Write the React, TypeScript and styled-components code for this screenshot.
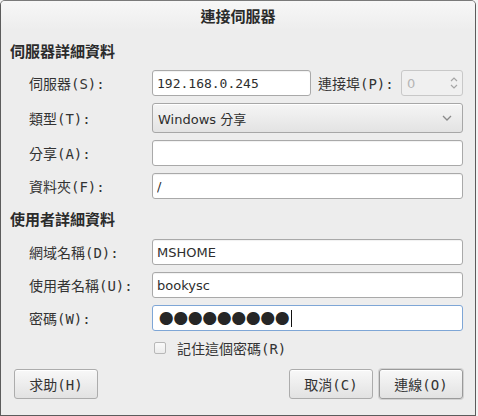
import React from "react";
import styled, { createGlobalStyle } from "styled-components";

const Global = createGlobalStyle`
  html, body { margin: 0; padding: 0; background: #f3f3f3; }
  body { width: 478px; height: 416px; overflow: hidden; }
  * { box-sizing: border-box; }
`;

const CJK = `"Noto Sans CJK TC", "Noto Sans CJK SC", sans-serif`;
const LABEL_FONT = `"DejaVu Sans Mono", "Noto Sans CJK TC", monospace`;
const TEXT_FONT = `"DejaVu Sans", "Noto Sans CJK TC", sans-serif`;

const Window = styled.div`
  width: 476px;
  height: 416px;
  border: 1px solid #5c5c5c;
  border-top-color: #7a7a7a;
  border-radius: 5px 5px 0 0;
  background: #ededed;
  display: flex;
  flex-direction: column;
  overflow: hidden;
`;

const TitleBar = styled.div`
  height: 29px;
  flex: none;
  display: flex;
  align-items: center;
  justify-content: center;
  background: linear-gradient(#f7f7f7, #ededed);
  font-family: ${CJK};
  font-weight: 700;
  font-size: 15px;
  color: #2b2b2b;
`;

const Body = styled.div`
  flex: 1;
  display: flex;
  flex-direction: column;
  padding: 10px 12px 0 9px;
`;

const SectionHeader = styled.div<{ $after: number; $before?: number }>`
  height: 20px;
  display: flex;
  align-items: center;
  font-family: ${CJK};
  font-weight: 700;
  font-size: 15px;
  color: #2b2b2b;
  margin-top: ${(p) => p.$before ?? 0}px;
  margin-bottom: ${(p) => p.$after}px;
`;

const Grid = styled.div`
  display: grid;
  grid-template-columns: 123px 1fr;
  row-gap: 7px;
  margin-left: 19px;
`;

const Label = styled.div`
  display: flex;
  align-items: center;
  font-family: ${LABEL_FONT};
  font-size: 14px;
  color: #333;
  white-space: nowrap;
`;

const Entry = styled.input<{ $h?: number }>`
  width: 100%;
  height: ${(p) => p.$h ?? 26}px;
  margin: 0;
  border: 1px solid #a9a9a9;
  border-radius: 3px;
  background: #fff;
  padding: 0 4px;
  font-family: ${TEXT_FONT};
  font-size: 13px;
  color: #2e2e2e;
  outline: none;
  box-shadow: inset 0 1px 1px rgba(0, 0, 0, 0.06);
`;

const MonoEntry = styled(Entry)`
  font-family: "DejaVu Sans Mono", monospace;
`;

const PasswordBox = styled.div`
  height: 26px;
  border: 1px solid #7ea6d6;
  border-radius: 3px;
  background: #fff;
  display: flex;
  align-items: center;
  padding-left: 6px;
`;

const Dots = styled.span`
  font-family: "Noto Sans CJK TC", sans-serif;
  font-size: 14.5px;
  line-height: 1;
  color: #262626;
`;

const Caret = styled.span`
  width: 1px;
  height: 17px;
  background: #111;
  margin-left: 1px;
`;

const ServerRow = styled.div`
  display: grid;
  grid-template-columns: 159px 1fr 62px;
  column-gap: 7px;
  align-items: center;
`;

const SpinBox = styled.div`
  height: 26px;
  border: 1px solid #c8c8c8;
  border-radius: 3px;
  background: #f0f0f0;
  display: flex;
  align-items: center;
  justify-content: space-between;
  padding: 0 4px 0 5px;
  font-family: ${TEXT_FONT};
  font-size: 13px;
  color: #b5b5b5;
`;

const Combo = styled.div`
  height: 30px;
  border: 1px solid #a7a7a7;
  border-radius: 3px;
  background: linear-gradient(#f5f5f5, #e3e3e3);
  display: flex;
  align-items: center;
  justify-content: space-between;
  padding: 0 10px 0 5px;
  font-family: ${TEXT_FONT};
  font-size: 13px;
  color: #2e2e2e;
  box-shadow: inset 0 1px 0 #fff;
`;

const CheckRow = styled.div`
  display: flex;
  align-items: center;
  gap: 11px;
  margin: 7px 0 0 144px;
  height: 20px;
`;

const CheckBox = styled.span`
  width: 12px;
  height: 12px;
  border: 1px solid #b8b8b8;
  border-radius: 2px;
  background: linear-gradient(#fafafa, #ececec);
`;

const CheckLabel = styled.span`
  font-family: ${LABEL_FONT};
  font-size: 14px;
  color: #333;
`;

const ButtonBar = styled.div`
  display: flex;
  align-items: center;
  gap: 6px;
  margin-top: 11px;
  padding-left: 4px;
`;

const Spacer = styled.div`
  flex: 1;
`;

const Button = styled.button<{ $default?: boolean }>`
  width: 84px;
  height: 30px;
  margin: 0;
  border: 1px solid ${(p) => (p.$default ? "#9a9a9a" : "#acacac")};
  border-radius: 3px;
  background: linear-gradient(#f8f8f8, #e2e2e2);
  box-shadow: inset 0 1px 0 #fff ${(p) => (p.$default ? ", 0 0 0 1px #d2d2d2" : "")};
  font-family: ${LABEL_FONT};
  font-size: 14px;
  color: #333;
  padding: 0;
`;

const Chevron = () => (
  <svg width="10" height="6" viewBox="0 0 10 6">
    <path d="M1 1 L5 5 L9 1" fill="none" stroke="#8a8a8a" strokeWidth="1.3" />
  </svg>
);

const SpinArrows = () => (
  <svg width="8" height="16" viewBox="0 0 8 16">
    <path d="M1 6 L4 3 L7 6" fill="none" stroke="#a5a5a5" strokeWidth="1.2" />
    <path d="M1 10 L4 13 L7 10" fill="none" stroke="#a5a5a5" strokeWidth="1.2" />
  </svg>
);

export default function App() {
  return (
    <>
      <Global />
      <Window>
        <TitleBar>連接伺服器</TitleBar>
        <Body>
          <SectionHeader $after={10}>伺服器詳細資料</SectionHeader>
          <Grid>
            <Label>伺服器(S):</Label>
            <ServerRow>
              <MonoEntry readOnly value="192.168.0.245" />
              <Label>連接埠(P):</Label>
              <SpinBox>
                <span>0</span>
                <SpinArrows />
              </SpinBox>
            </ServerRow>
            <Label>類型(T):</Label>
            <Combo>
              <span>Windows 分享</span>
              <Chevron />
            </Combo>
            <Label>分享(A):</Label>
            <Entry readOnly value="" />
            <Label>資料夾(F):</Label>
            <Entry readOnly value="/" />
          </Grid>
          <SectionHeader $before={9} $after={11}>
            使用者詳細資料
          </SectionHeader>
          <Grid>
            <Label>網域名稱(D):</Label>
            <Entry readOnly value="MSHOME" />
            <Label>使用者名稱(U):</Label>
            <Entry readOnly value="bookysc" />
            <Label>密碼(W):</Label>
            <PasswordBox>
              <Dots>●●●●●●●●●</Dots>
              <Caret />
            </PasswordBox>
          </Grid>
          <CheckRow>
            <CheckBox />
            <CheckLabel>記住這個密碼(R)</CheckLabel>
          </CheckRow>
          <ButtonBar>
            <Button>求助(H)</Button>
            <Spacer />
            <Button>取消(C)</Button>
            <Button $default>連線(O)</Button>
          </ButtonBar>
        </Body>
      </Window>
    </>
  );
}
